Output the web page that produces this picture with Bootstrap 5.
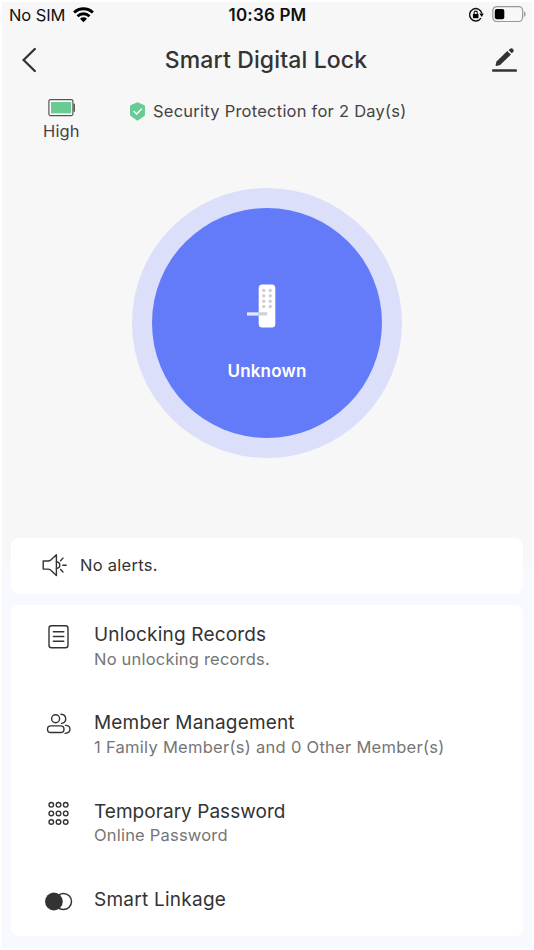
<!DOCTYPE html>
<html lang="en">
<head>
<meta charset="utf-8">
<meta name="viewport" content="width=device-width, initial-scale=1">
<title>Smart Digital Lock</title>
<link href="https://cdn.jsdelivr.net/npm/bootstrap@5.3.0/dist/css/bootstrap.min.css" rel="stylesheet">
<style>
  body { font-family: Inter, "Liberation Sans", sans-serif; color: #333; background: #fff; }
  svg { display: block; flex: none; }
  .screen { height: 950px; padding: 2px 2px 0; overflow: hidden; }
  .surface { height: 946px; background: linear-gradient(#f7f7f7 0 558px, #f8f9fe 566px); }
  .status-bar { height: 26px; padding: 0 6px 0 7px; color: #111; font-size: 17px; line-height: 26px; }
  .status-bar > div { flex: 1 1 0; }
  .carrier { font-size: 16.5px; letter-spacing: -.1px; }
  .clock { font-weight: 600; letter-spacing: .18px; }
  .title-bar { height: 64px; padding: 0 15px 0 20px; }
  .title-bar h1 { font-size: 23px; font-weight: 500; letter-spacing: .14px; line-height: 28px; padding-left: 3px; }
  .summary { height: 95.5px; padding: 6px 0 0 41px; color: #444; font-size: 16.5px; line-height: 20px; }
  .level { width: 37px; letter-spacing: .15px; }
  .level svg { margin: 0 0 3px 5px; }
  .protection { margin-left: 50px; padding-top: 3px; letter-spacing: .24px; }
  .lock-ring { width: 270px; height: 270px; background: #dbdffa; }
  .lock-button { width: 230px; height: 230px; background: #637bf8; font-size: 17px; font-weight: 600; line-height: 20px; padding-top: 19px; }
  .state { letter-spacing: .2px; }
  .panel { margin: 0 9px; border: 0; border-radius: 8px; }
  .alerts { height: 56px; margin-top: 80px; padding: 0 0 1px 31px; font-size: 16.5px; letter-spacing: .27px; }
  .alert-text { margin-left: 12px; }
  .features { height: 331px; margin-top: 11.5px; }
  .features .list-group-item { height: 88.4px; padding: 18px 0 0 34px; color: #333; background: none; }
  .glyph { width: 28px; margin-right: 21px; }
  .name { font-size: 19px; line-height: 24px; letter-spacing: .18px; }
  .name-tight { letter-spacing: .04px; }
  .name-wide { letter-spacing: .25px; }
  .detail { font-size: 16.5px; line-height: 20px; letter-spacing: .2px; color: #757575; margin-top: 1.5px; }
  .detail-wide { letter-spacing: .28px; }
</style>
</head>
<body>
<main class="screen">
  <div class="surface">
    <header>
      <div class="status-bar d-flex align-items-center">
        <div class="d-flex align-items-center gap-2"><span class="carrier text-nowrap">No SIM</span>
          <svg width="21" height="16" viewBox="0 0 21 16"><g fill="none" stroke="#000" stroke-width="2.9"><path d="M1.1 5.5C6.5.5 14.5.5 19.9 5.5"/><path d="M4.5 9.2C8 6 13 6 16.5 9.2"/></g><path d="M7 11.7C9 9.900 12 9.900 14 11.7L10.5 15.3Z"/></svg>
        </div>
        <div class="clock text-center text-nowrap">10:36 PM</div>
        <div class="d-flex align-items-center justify-content-end gap-2">
          <svg width="16" height="16" viewBox="0 0 16 16"><path d="M13 11.2A6.2 6.2 0 1 1 13.8 6.2" fill="none" stroke="#111" stroke-width="1.4"/><path d="M11.4 6.6h4.4l-2.1 3.4z"/><rect x="4.9" y="6.9" width="5.6" height="4.3" rx=".6"/><path d="M6.1 7.2V5.7a1.6 1.6 0 0 1 3.2 0v1.5" fill="none" stroke="#111" stroke-width="1.1"/></svg>
          <svg class="mb-1" width="34" height="17" viewBox="0 0 34 17"><rect x=".8" y="1.6" width="29.8" height="15" rx="4" fill="none" stroke="#999" stroke-width="1.2"/><rect x="2.8" y="3.9" width="9.5" height="10.4" rx="2"/><path d="M32 6.2q1.600.7 1.600 2.900t-1.600 2.900z" fill="#999"/></svg>
        </div>
      </div>
      <div class="title-bar d-flex align-items-center justify-content-between">
        <svg width="15" height="26" viewBox="0 0 15 26"><path d="M12.8 2 1.6 13l11.2 11" fill="none" stroke="#333" stroke-width="2.3" stroke-linecap="round"/></svg>
        <h1 class="m-0 text-nowrap">Smart Digital Lock</h1>
        <svg width="25" height="26" viewBox="0 0 25 26"><path d="M1.3 23.500h22.400" stroke="#333" stroke-width="2.7" stroke-linecap="round"/><path d="M4.500 14.600 15.300 4.100l3.600 3.500L8.100 18.100l-3.700.9q-1 0-.8-1z" fill="#333"/><path d="m16.600 3.300 1.500-1.500q1.500-1.200 2.900.2t.2 2.900l-1.400 1.400z" fill="#333"/></svg>
      </div>
    </header>
    <section class="summary d-flex align-items-start">
      <div class="level">
        <svg width="27" height="20" viewBox="0 0 27 20"><rect x=".9" y="1.6" width="24" height="16" rx="1.5" fill="#fff" stroke="#555" stroke-width="1.2"/><rect x="3" y="4" width="20.2" height="11.4" fill="#69cb94"/><path d="M26.200 5.800v8" stroke="#555" stroke-width="1.5"/></svg>
        <span>High</span>
      </div>
      <div class="protection d-flex align-items-center">
        <svg class="me-2" width="15" height="19" viewBox="0 0 15 19"><path d="M7.500.3 14 3q1 .4 1 1.400v7.800q0 1.600-1.300 2.400l-6.200 4.200-6.200-4.200Q0 13.800 0 12.200V4.400Q0 3.400 1 3Z" fill="#69cb94"/><path d="m3.600 9 3 2.900 5.200-5.200" fill="none" stroke="#fff" stroke-width="1.4"/></svg>
        <span class="text-nowrap">Security Protection for 2 Day(s)</span>
      </div>
    </section>
    <div class="lock-ring rounded-circle mx-auto d-flex align-items-center justify-content-center">
      <div class="lock-button rounded-circle d-flex flex-column align-items-center justify-content-center text-white">
        <svg width="40" height="46" viewBox="0 0 40 46"><rect x="11.7" y="1.5" width="16.6" height="43" rx="3.5" fill="#fff"/><g fill="#cfcfd3"><circle cx="16.7" cy="7.5" r="1.7"/><circle cx="23.2" cy="7.5" r="1.7"/><circle cx="16.7" cy="12.8" r="1.7"/><circle cx="23.2" cy="12.8" r="1.7"/><circle cx="16.7" cy="18.2" r="1.7"/><circle cx="23.2" cy="18.2" r="1.7"/><circle cx="16.7" cy="23.5" r="1.7"/><circle cx="23.2" cy="23.5" r="1.7"/></g><path d="M0 29.300h11.700v3.300H0z" fill="#e4e6f2"/><path d="M11.700 29.300h8.500v3.300h-8.500z" fill="#d2d2d6"/></svg>
        <span class="state mt-4 pt-2">Unknown</span>
      </div>
    </div>
    <section class="panel alerts card flex-row align-items-center">
      <svg width="26" height="24" viewBox="0 0 26 24" fill="none" stroke="#333" stroke-width="1.4"><path d="M1.200 8h4.600q2 0 3-1l5.600-5.200v20.800L8.600 17q-1-.9-2.800-.9H1.200Z" stroke-linejoin="round"/><path d="M14.400 8.800q3.400.3 3.400 3.400t-3.400 3.200M18.600 7.700l2.400-2.600M20.800 12.200h3.400M18.600 16.600l2.400 2.400" stroke-linecap="round"/></svg>
      <span class="alert-text">No alerts.</span>
    </section>
    <section class="panel features card">
      <ul class="list-group list-group-flush">
        <li class="list-group-item border-0 d-flex">
          <div class="glyph"><svg width="28" height="28" viewBox="0 0 28 28" fill="none" stroke="#333" stroke-width="1.4" stroke-linecap="round"><rect x="4" y="2.7" width="19" height="22" rx="2.5"/><path d="M8.300 8.800h10.500M8.300 13.500h10.500M8.300 18.200h10.500"/></svg></div>
          <div><div class="name">Unlocking Records</div><div class="detail">No unlocking records.</div></div>
        </li>
        <li class="list-group-item border-0 d-flex">
          <div class="glyph"><svg width="28" height="28" viewBox="0 0 28 28" fill="none" stroke="#333" stroke-width="1.4" stroke-linecap="round"><circle cx="10.6" cy="7.7" r="4"/><rect x="2.5" y="14.9" width="16.5" height="6.6" rx="3.3"/><path d="M15.900 3.300c6.300.2 6.300 8.300.6 9.100M20.500 14.400c6 .2 6 7.500-.4 8"/></svg></div>
          <div><div class="name">Member Management</div><div class="detail detail-wide">1 Family Member(s) and 0 Other Member(s)</div></div>
        </li>
        <li class="list-group-item border-0 d-flex">
          <div class="glyph"><svg width="28" height="28" viewBox="0 0 28 28" fill="none" stroke="#333" stroke-width="1.4"><circle cx="6.3" cy="4.8" r="2.3"/><circle cx="13.5" cy="4.8" r="2.3"/><circle cx="20.7" cy="4.8" r="2.3"/><circle cx="6.3" cy="13.4" r="2.3"/><circle cx="13.5" cy="13.4" r="2.3"/><circle cx="20.7" cy="13.4" r="2.3"/><circle cx="6.3" cy="22" r="2.3"/><circle cx="13.5" cy="22" r="2.3"/><circle cx="20.7" cy="22" r="2.3"/></svg></div>
          <div><div class="name name-tight">Temporary Password</div><div class="detail">Online Password</div></div>
        </li>
        <li class="list-group-item border-0 d-flex">
          <div class="glyph"><svg width="28" height="28" viewBox="0 0 28 28"><circle cx="18.4" cy="13.5" r="8.1" fill="#fff" stroke="#333" stroke-width="1.5"/><circle cx="8.9" cy="13.5" r="8.9" fill="#333"/></svg></div>
          <div><div class="name name-wide">Smart Linkage</div></div>
        </li>
      </ul>
    </section>
  </div>
</main>
<script src="https://cdn.jsdelivr.net/npm/bootstrap@5.3.0/dist/js/bootstrap.bundle.min.js"></script>
</body>
</html>
